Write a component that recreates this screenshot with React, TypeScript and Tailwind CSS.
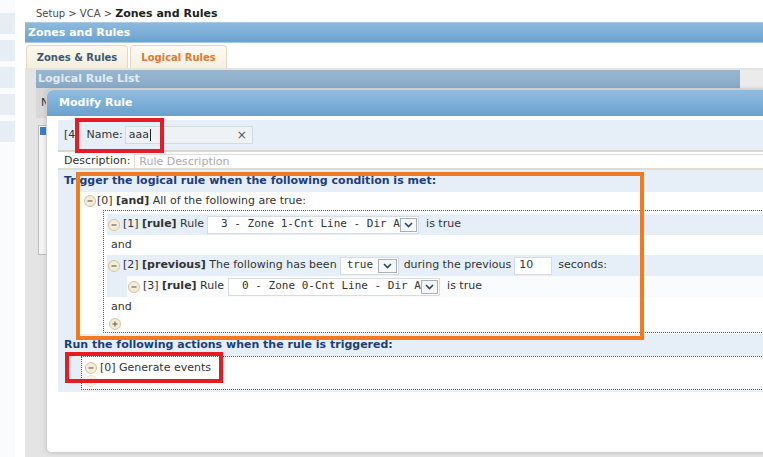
import React from "react";

// small +/- circle used by the rule tree
function Toggle({ plus = false, faded = false }: { plus?: boolean; faded?: boolean }) {
  return (
    <span
      className={`flex h-[12px] w-[12px] shrink-0 items-center justify-center rounded-full border border-[#d5c59f] bg-[#f4ecd6] ${
        faded ? "opacity-50" : ""
      }`}
    >
      <svg width="8" height="8" viewBox="0 0 8 8">
        <path d="M1.5 4h5" stroke="#6a6a6a" strokeWidth="1.2" />
        {plus && <path d="M4 1.5v5" stroke="#6a6a6a" strokeWidth="1.2" />}
      </svg>
    </span>
  );
}

function Arrow() {
  return (
    <span className="flex h-[14px] w-[19px] items-center justify-center border border-[#a7b1ba] bg-[#f7f7f7]">
      <svg width="9" height="6" viewBox="0 0 9 6">
        <path d="M1 1l3.5 3.5L8 1" fill="none" stroke="#2c4766" strokeWidth="1.6" />
      </svg>
    </span>
  );
}

function Select({ value, className }: { value: string; className: string }) {
  return (
    <span
      className={`flex h-[18px] shrink-0 items-center justify-between border border-[#d6dce2] bg-white pr-[1px] ${className}`}
    >
      <span className="whitespace-pre font-['DejaVu_Sans_Mono',monospace] text-[11px] text-[#333]">
        {value}
      </span>
      <Arrow />
    </span>
  );
}

export default function App() {
  return (
    <div className="relative h-[457px] w-[763px] overflow-hidden bg-white font-['DejaVu_Sans',sans-serif] text-[11px] text-[#333]">
      <div className="flex h-full">
        {/* Side menu */}
        <div className="flex w-[15px] shrink-0 flex-col gap-[6px] bg-[#fafbfc] pt-[13px]">
          {[0, 1, 2, 3, 4].map((i) => (
            <div key={i} className="h-[21px] bg-[#e6edf4]" />
          ))}
        </div>

        <div className="ml-[10px] flex min-w-0 flex-1 flex-col">
          {/* Breadcrumb */}
          <div className="flex h-[22px] items-baseline whitespace-pre pl-[11px] pt-[7px] leading-[13px]">
            <span className="text-[10px] text-[#4a4a4a]">Setup &gt; VCA &gt; </span>
            <span className="text-[11px] font-bold text-[#222]">Zones and Rules</span>
          </div>

          {/* Page title bar */}
          <div className="h-[21px] border-y border-[#a9cbe6] bg-gradient-to-b from-[#8cb9de] via-[#7cafd8] to-[#6ba2ce] pl-[3px] text-[11px] font-bold leading-[19px] text-white">
            Zones and Rules
          </div>

          {/* Tabs */}
          <div className="flex h-[25px] items-end gap-[2px] pl-[1px]">
            <div className="flex h-[23px] w-[102px] items-center justify-center rounded-t-[4px] border border-b-0 border-[#e2d9c2] bg-gradient-to-b from-[#fbf8ef] to-[#f4eedd] text-[10px] font-bold text-[#3e5872]">
              Zones &amp; Rules
            </div>
            <div className="flex h-[23px] w-[97px] items-center justify-center rounded-t-[4px] border border-b-0 border-[#e2d9c2] bg-gradient-to-b from-[#fdfbf5] to-[#f6f0e0] text-[10px] font-bold text-[#e07b2b]">
              Logical Rules
            </div>
          </div>

          {/* List panel behind the dialog */}
          <div className="flex-1 bg-[#e4e4e4] pl-[11px] pt-[2px]">
            <div className="flex h-[18px]">
              <div className="w-[704px] bg-gradient-to-b from-[#97b6d0] to-[#88a9c6] pl-[2px] text-[11px] font-bold leading-[18px] text-[#e1eaf3]">
                Logical Rule List
              </div>
              <div className="flex-1 bg-[#ebebeb]" />
            </div>
            <div className="h-[30px] w-[704px] bg-[#d8d8d8] pl-[5px] pt-[9px] leading-[12px]">N</div>
            <div className="ml-[2px] mt-[7px] h-[130px] w-[40px] border border-[#bdbdbd] bg-[#f4f4f4] p-[1px]">
              <div className="h-[8px] w-[8px] bg-[#3b7fc4]" />
            </div>
          </div>
        </div>
      </div>

      {/* Modify Rule dialog */}
      <div className="absolute left-[46px] top-[89px] flex h-[364px] w-[740px] flex-col rounded-b-[5px] rounded-t-[7px] border border-[#d0d0d0] bg-white shadow-[0_0_4px_rgba(0,0,0,0.15)]">
        <div className="h-[26px] rounded-t-[6px] bg-gradient-to-b from-[#90bce1] via-[#7db0d9] to-[#6aa1cd] pl-[12px] text-[11px] font-bold leading-[26px] text-white">
          Modify Rule
        </div>

        <div className="px-[11px] pt-[4px]">
          <div className="flex flex-col bg-[#e6eff7] pb-[1px]">
            {/* Name */}
            <div className="flex h-[30px] items-center pl-[6px]">
              <span>[4]</span>
              <span className="ml-[7px]">Name:</span>
              <div className="ml-[2px] flex h-[18px] w-[128px] items-center justify-between border border-[#d3d9de] bg-[#eef2f5] pl-[3px] pr-[5px]">
                <span className="flex items-center">
                  aaa
                  <span className="ml-[1px] h-[12px] w-px bg-[#222]" />
                </span>
                <span className="text-[12px] text-[#555]">×</span>
              </div>
            </div>
            <div className="h-[2px] bg-[#dad6c6]" />

            {/* Description */}
            <div className="flex h-[16px] items-end bg-white pl-[6px]">
              <span className="leading-[14px]">Description:</span>
              <div className="ml-[4px] h-[14px] flex-1 border border-b-0 border-[#dcdcdc] pl-[4px] leading-[13px] text-[#aaa]">
                Rule Description
              </div>
            </div>
            <div className="h-[2px] bg-[#e0dccf]" />

            {/* Trigger */}
            <div className="h-[22px] pl-[6px] font-bold leading-[22px] text-[#1d3e7a]">
              Trigger the logical rule when the following condition is met:
            </div>
            <div className="flex">
              <div className="w-[22px] shrink-0" />
              <div className="flex flex-1 flex-col bg-white">
                <div className="flex h-[18px] items-center whitespace-pre pl-[4px]">
                  <Toggle />
                  <span className="ml-[1px]">
                    [0] <b>[and]</b> All of the following are true:
                  </span>
                </div>

                <div className="ml-[23px] flex flex-col border-y border-l border-dotted border-[#43588c] pb-[2px] pl-[3px] pt-[3px]">
                  {/* [1] */}
                  <div className="flex h-[21px] items-center whitespace-pre bg-[#e6eff7] pl-[1px]">
                    <Toggle />
                    <span className="ml-[3px]">
                      [1] <b>[rule]</b> Rule
                    </span>
                    <Select value="3 - Zone 1-Cnt Line - Dir A" className="ml-[3px] w-[212px] pl-[13px]" />
                    <span className="ml-[7px]">is true</span>
                  </div>
                  <div className="flex h-[20px] items-center pl-[4px]">and</div>

                  {/* [2] */}
                  <div className="flex flex-col bg-[#e6eff7]">
                    <div className="flex h-[21px] items-center whitespace-pre pl-[1px]">
                      <Toggle />
                      <span className="ml-[3px]">
                        [2] <b>[previous]</b> The following has been
                      </span>
                      <Select value="true" className="ml-[3px] w-[59px] pl-[6px]" />
                      <span className="ml-[5px]">during the previous</span>
                      <div className="ml-[3px] flex h-[18px] w-[38px] items-center border border-[#d6dce2] bg-white pl-[4px]">
                        10
                      </div>
                      <span className="ml-[6px]">seconds:</span>
                    </div>
                    <div className="ml-[20px] flex h-[21px] items-center whitespace-pre bg-[#f9fbfd] pl-[1px]">
                      <Toggle />
                      <span className="ml-[3px]">
                        [3] <b>[rule]</b> Rule
                      </span>
                      <Select value="0 - Zone 0-Cnt Line - Dir A" className="ml-[4px] w-[212px] pl-[13px]" />
                      <span className="ml-[7px]">is true</span>
                    </div>
                  </div>
                  <div className="flex h-[20px] items-center pl-[4px]">and</div>
                  <div className="flex h-[13px] items-center pl-[2px]">
                    <Toggle plus />
                  </div>
                </div>
                <div className="h-[1px]" />
              </div>
            </div>

            {/* Actions */}
            <div className="h-[22px] pl-[6px] font-bold leading-[22px] text-[#1d3e7a]">
              Run the following actions when the rule is triggered:
            </div>
            <div className="flex pb-[1px]">
              <div className="w-[23px] shrink-0" />
              <div className="flex h-[34px] flex-1 flex-col border-y border-l border-dotted border-[#43588c] bg-white pl-[3px] pt-[5px]">
                <div className="flex h-[12px] items-center whitespace-pre">
                  <Toggle />
                  <span className="ml-[3px]">[0] Generate events</span>
                </div>
                <div className="mt-[1px]">
                  <Toggle plus faded />
                </div>
              </div>
            </div>
          </div>
        </div>
      </div>

      {/* Annotation boxes */}
      <div className="absolute left-[75px] top-[118px] h-[35px] w-[89px] border-[4px] border-[#e51c24]" />
      <div className="absolute left-[76px] top-[172px] h-[168px] w-[568px] border-[4px] border-[#f47a20]" />
      <div className="absolute left-[65px] top-[352px] h-[31px] w-[158px] border-[4px] border-[#e51c24]" />
    </div>
  );
}
